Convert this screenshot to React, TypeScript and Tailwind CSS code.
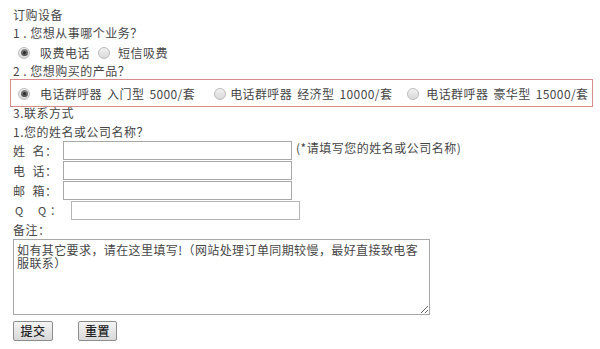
import React from "react";

function Radio({ checked }: { checked?: boolean }) {
  return (
    <span className="w-[12px] h-[12px] shrink-0 rounded-full border border-[#bcbcbc] bg-gradient-to-b from-[#f2f2f2] to-[#d8d8d8] flex items-center justify-center">
      {checked && (
        <span className="w-[7px] h-[7px] rounded-full bg-gradient-to-b from-[#8a8a8a] to-[#4a4a4a] flex items-center justify-center">
          <span className="w-[3px] h-[3px] rounded-full bg-[#2a2a2a]" />
        </span>
      )}
    </span>
  );
}

export default function App() {
  return (
    <div className="w-[600px] h-[349px] bg-white overflow-hidden pl-[13px] pt-[6px] text-[12px] tracking-[0.5px] text-[#474747] font-['Noto_Sans_CJK_SC',sans-serif]">
      <div className="h-[18px] leading-[18px]">订购设备</div>
      <div className="h-[18px] leading-[18px]">1 . 您想从事哪个业务？</div>

      <div className="h-[21px] flex items-center pl-[5px]">
        <label className="flex items-center mr-[8px]">
          <Radio checked />
          <span className="ml-[10px]">吸费电话</span>
        </label>
        <label className="flex items-center">
          <Radio />
          <span className="ml-[8px]">短信吸费</span>
        </label>
      </div>

      <div className="h-[16px] leading-[16px]">2 . 您想购买的产品？</div>

      <div className="ml-[-3px] w-[583px] h-[28px] border border-[#d98a8a] flex items-center pl-[7px] pt-[1px] tracking-[0.4px] [word-spacing:2px]">
        <label className="flex items-center mr-[19px]">
          <Radio checked />
          <span className="ml-[10px] whitespace-pre">电话群呼器 入门型 5000/套</span>
        </label>
        <label className="flex items-center mr-[15px]">
          <Radio />
          <span className="ml-[4px] whitespace-pre">电话群呼器 经济型 10000/套</span>
        </label>
        <label className="flex items-center">
          <Radio />
          <span className="ml-[7px] whitespace-pre">电话群呼器 豪华型 15000/套</span>
        </label>
      </div>

      <div className="h-[12px] leading-[12px]">3.联系方式</div>
      <div className="h-[22px] pt-[7px] leading-[12px]">1.您的姓名或公司名称？</div>

      <div className="flex flex-col">
        <div className="h-[20px] flex items-start">
          <span className="w-[50px] flex leading-[19px]">
            <span className="mr-[7px]">姓</span>
            <span>名：</span>
          </span>
          <input className="w-[229px] h-[19px] border border-[#a8a8a8] outline-none" />
          <span className="ml-[4px] leading-[12px] pt-[1px]">(*请填写您的姓名或公司名称)</span>
        </div>
        <div className="h-[20px] flex items-start">
          <span className="w-[50px] flex leading-[19px]">
            <span className="mr-[7px]">电</span>
            <span>话：</span>
          </span>
          <input className="w-[229px] h-[19px] border border-[#a8a8a8] outline-none" />
        </div>
        <div className="h-[20px] flex items-start">
          <span className="w-[50px] flex leading-[19px]">
            <span className="mr-[7px]">邮</span>
            <span>箱：</span>
          </span>
          <input className="w-[229px] h-[19px] border border-[#a8a8a8] outline-none" />
        </div>
        <div className="h-[20px] flex items-start">
          <span className="w-[58px] flex leading-[19px] text-[11px]">
            <span className="w-[25px] pl-[2px]">Q</span>
            <span className="w-[12px]">Q</span>
            <span>：</span>
          </span>
          <input className="w-[229px] h-[19px] border border-[#b5b5b5] outline-none" />
        </div>
      </div>

      <div className="h-[18px] pt-[3px] leading-[12px]">备注：</div>
      <textarea
        className="block w-[417px] h-[76px] border border-[#a8a8a8] pl-[3px] pr-[3px] pt-[3px] leading-[13px] text-[12px] tracking-[0.4px] text-[#474747] outline-none font-['Noto_Sans_CJK_SC',sans-serif]"
        defaultValue="如有其它要求，请在这里填写!（网站处理订单同期较慢，最好直接致电客服联系）"
      />

      <div className="mt-[6px] flex gap-[25px]">
        <button className="w-[40px] h-[20px] border border-[#8c8c8c] rounded-[2px] bg-gradient-to-b from-[#f4f4f4] to-[#d8d8d8] text-[12px] font-medium text-[#222] leading-[18px]">
          提交
        </button>
        <button className="w-[39px] h-[20px] border border-[#8c8c8c] rounded-[2px] bg-gradient-to-b from-[#f4f4f4] to-[#d8d8d8] text-[12px] font-medium text-[#222] leading-[18px]">
          重置
        </button>
      </div>
    </div>
  );
}
